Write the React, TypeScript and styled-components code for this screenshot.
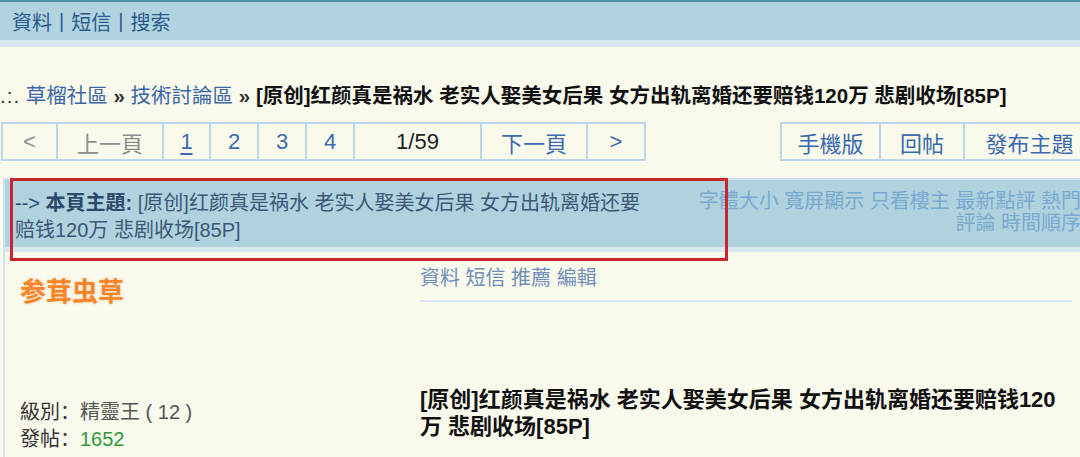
import React from 'react'
import styled, { createGlobalStyle } from 'styled-components'

const GlobalStyle = createGlobalStyle`
  html, body {
    margin: 0;
    padding: 0;
    background: #f9f9ec;
    overflow: hidden;
  }
  body {
    font-family: "Liberation Sans", "Noto Sans CJK SC", sans-serif;
    font-size: 20px;
    color: #222;
  }
`

const pagerCells = [
  { label: '<', width: 57, tone: 'off' },
  { label: '上一頁', width: 106, tone: 'off' },
  { label: '1', width: 47, tone: 'current' },
  { label: '2', width: 48, tone: 'link' },
  { label: '3', width: 48, tone: 'link' },
  { label: '4', width: 48, tone: 'link' },
  { label: '1/59', width: 127, tone: 'text' },
  { label: '下一頁', width: 106, tone: 'link' },
  { label: '>', width: 58, tone: 'link' },
]

const actionCells = [
  { label: '手機版', width: 101 },
  { label: '回帖', width: 84 },
  { label: '發布主題', width: 131 },
]

const toolLinks = ['字體大小', '寬屏顯示', '只看樓主', '最新點評', '熱門評論', '時間順序']

const title = '[原创]红颜真是祸水 老实人娶美女后果 女方出轨离婚还要赔钱120万 悲剧收场[85P]'

export default function App() {
  return (
    <>
      <GlobalStyle />
      <Page>
        <TopBar>
          <TopLink>資料</TopLink>
          <Sep>|</Sep>
          <TopLink>短信</TopLink>
          <Sep>|</Sep>
          <TopLink>搜索</TopLink>
        </TopBar>

        <Breadcrumb>
          <Dots>.:.</Dots> <Crumb>草榴社區</Crumb> <Arrow>»</Arrow> <Crumb>技術討論區</Crumb>{' '}
          <Arrow>»</Arrow> <CurrentTitle>{title}</CurrentTitle>
        </Breadcrumb>

        <PagerRow>
          <PagerGroup>
            {pagerCells.map(c => (
              <Cell key={c.label} $width={c.width} $tone={c.tone}>
                {c.label}
              </Cell>
            ))}
          </PagerGroup>
          <ActionGroup>
            {actionCells.map(c => (
              <Cell key={c.label} $width={c.width} $tone="link">
                {c.label}
              </Cell>
            ))}
          </ActionGroup>
        </PagerRow>

        <ThreadBox>
          <ThemeBar>
            <ThemeText>
              <Lead>--&gt;</Lead> <ThemeLabel>本頁主題:</ThemeLabel> {title}
            </ThemeText>
            <Tools>
              {toolLinks.map((t, i) => (
                <React.Fragment key={t}>
                  {i > 0 && ' '}
                  <Tool>{t}</Tool>
                </React.Fragment>
              ))}
            </Tools>
          </ThemeBar>
          <Highlight />

          <PostRow>
            <UserCol>
              <UserName>参茸虫草</UserName>
              <Stats>
                <StatLine>
                  級別：<StatValue>精靈王 ( 12 )</StatValue>
                </StatLine>
                <StatLine>
                  發帖：<PostCount>1652</PostCount>
                </StatLine>
              </Stats>
            </UserCol>
            <ContentCol>
              <PostActions>資料 短信 推薦 編輯</PostActions>
              <PostTitle>{title}</PostTitle>
            </ContentCol>
          </PostRow>
        </ThreadBox>
      </Page>
    </>
  )
}

const Page = styled.div`
  width: 1096px;
`

const TopBar = styled.div`
  height: 38px;
  border-top: 2px solid #4a93a9;
  border-bottom: 7px solid #d8e8f0;
  background: #b1d3df;
  display: flex;
  align-items: center;
  padding-left: 12px;
  color: #2b5b8c;
`

const TopLink = styled.span`
  color: #2b5b8c;
`

const Sep = styled.span`
  margin: 0 7px;
  color: #2b5b8c;
`

const Breadcrumb = styled.div`
  margin-top: 33px;
  height: 32px;
  line-height: 32px;
  font-size: 20.5px;
  white-space: nowrap;
`

const Dots = styled.span`
  color: #333;
  letter-spacing: 1px;
`

const Crumb = styled.span`
  color: #3b67a8;
`

const Arrow = styled.span`
  font-weight: bold;
  color: #333;
`

const CurrentTitle = styled.span`
  font-weight: bold;
  color: #111;
`

const PagerRow = styled.div`
  display: flex;
  margin-top: 10px;
  padding-left: 1px;
`

const PagerGroup = styled.div`
  display: flex;
`

const ActionGroup = styled.div`
  display: flex;
  margin-left: auto;
`

const toneColor: Record<string, string> = {
  off: '#8c8c8c',
  current: '#3a6ab0',
  link: '#3a6ab0',
  text: '#222',
}

const Cell = styled.div<{ $width: number; $tone: string }>`
  box-sizing: border-box;
  width: ${p => p.$width}px;
  height: 39px;
  border: 2px solid #bcd7ec;
  display: flex;
  align-items: center;
  justify-content: center;
  font-size: 22px;
  color: ${p => toneColor[p.$tone]};
  text-decoration: ${p => (p.$tone === 'current' ? 'underline' : 'none')};
  text-underline-offset: 4px;

  & + & {
    border-left: none;
  }
`

const ThreadBox = styled.div`
  position: relative;
  margin-top: 17px;
  margin-left: 3px;
  border-left: 2px solid #cfe2ef;
`

const ThemeBar = styled.div`
  display: flex;
  border-top: 2px solid #cfe2ef;
  border-bottom: 5px solid #d8e8f0;
  background: #b0d2df;
  padding: 10px 15px 3px 10px;
`

const ThemeText = styled.div`
  width: 634px;
  flex: none;
  line-height: 27px;
  color: #3c5876;
`

const Lead = styled.span`
  color: #2e4d70;
`

const ThemeLabel = styled.span`
  font-weight: bold;
  color: #2b4a6b;
`

const Tools = styled.div`
  flex: 1;
  margin-left: 36px;
  text-align: right;
  line-height: 22px;
  color: #7aa9cf;
`

const Tool = styled.span`
  color: #7aa9cf;
`

const Highlight = styled.div`
  position: absolute;
  left: 5px;
  top: 0;
  width: 718px;
  height: 83px;
  box-sizing: border-box;
  border: 3px solid #c8252c;
  pointer-events: none;
`

const PostRow = styled.div`
  display: flex;
  height: 210px;
`

const UserCol = styled.div`
  width: 395px;
  flex: none;
  padding-left: 15px;
  box-sizing: border-box;
`

const UserName = styled.div`
  margin-top: 24px;
  font-size: 26px;
  line-height: 32px;
  font-weight: bold;
  color: #f7862b;
  text-shadow: 0 0 3px rgba(247, 134, 43, 0.35);
`

const Stats = styled.div`
  margin-top: 91px;
  line-height: 27px;
`

const StatLine = styled.div`
  color: #333;
`

const StatValue = styled.span`
  color: #555;
`

const PostCount = styled.span`
  color: #2e9a3a;
`

const ContentCol = styled.div`
  flex: 1;
  padding-left: 20px;
  padding-right: 24px;
`

const PostActions = styled.div`
  margin-top: 13px;
  line-height: 26px;
  padding-bottom: 9px;
  border-bottom: 2px solid #d5e7f3;
  color: #6f90b8;
`

const PostTitle = styled.div`
  margin-top: 84px;
  font-size: 22px;
  line-height: 27px;
  font-weight: bold;
  color: #111;
`
